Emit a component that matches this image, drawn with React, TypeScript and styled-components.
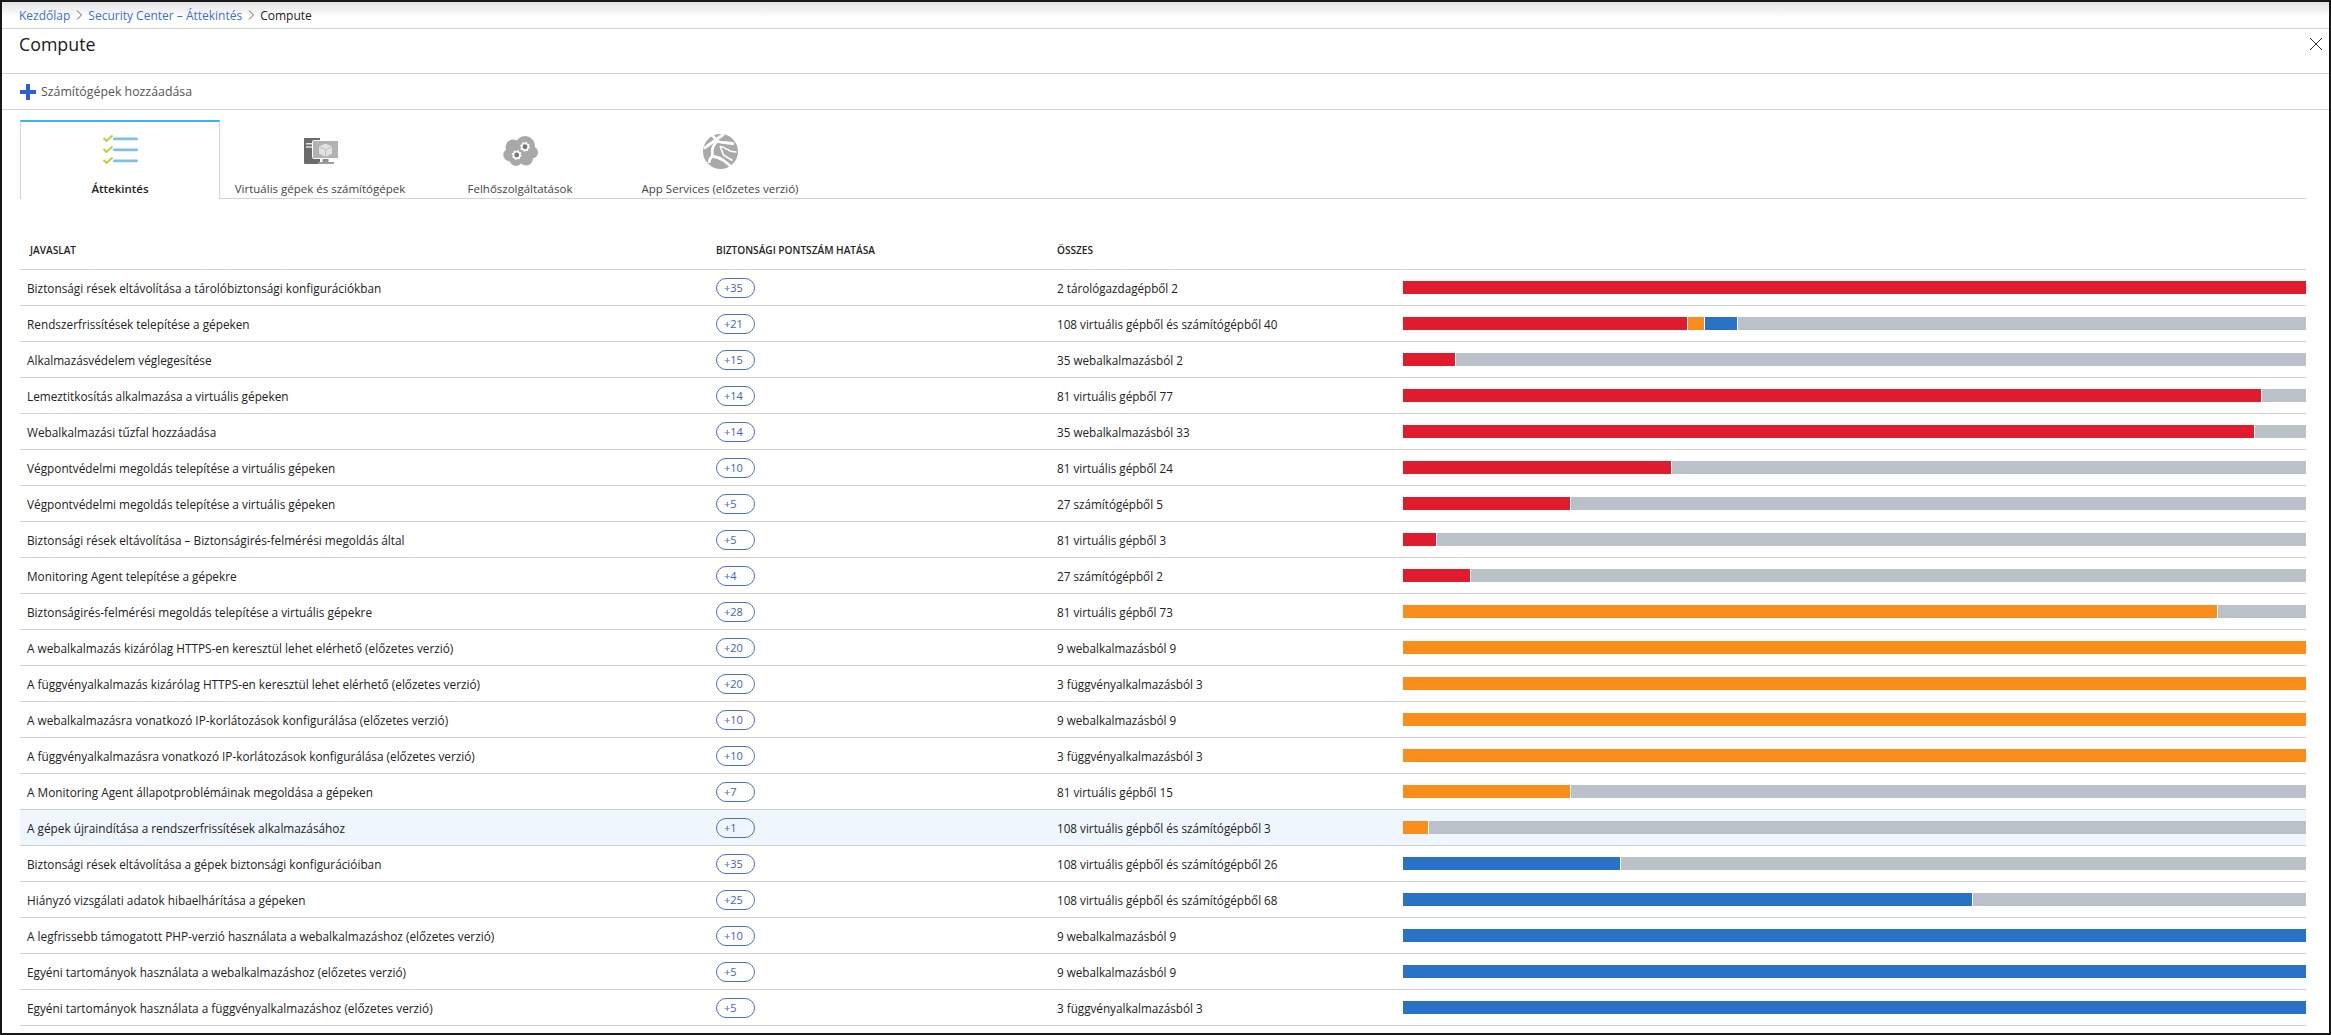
import React from "react";
import styled, { createGlobalStyle } from "styled-components";

const Global = createGlobalStyle`
  html, body { margin: 0; padding: 0; background: #161616; }
  body { font-family: "Open Sans", "Liberation Sans", sans-serif; }
`;

const Frame = styled.div`
  box-sizing: border-box;
  width: 2331px;
  height: 1035px;
  padding: 2px;
  background: #161616;
  overflow: hidden;
`;
const Blade = styled.div`
  height: 100%;
  background: #fff;
  display: flex;
  flex-direction: column;
`;
const Breadcrumbs = styled.nav`
  box-sizing: border-box;
  height: 27px;
  flex: none;
  padding-left: 17px;
  display: flex;
  align-items: center;
  gap: 5px;
  font-size: 12px;
  border-bottom: 1px solid #d4d4d4;
  background: linear-gradient(#e2e2e2 0, #fff 15px);
`;
const Crumb = styled.span`color: #3a6fd8;`;
const CrumbCurrent = styled.span`color: #222;`;
const Chevron = styled.svg`width: 6px; height: 10px; margin: 0 1px; fill: none; stroke: #666; stroke-width: 1;`;
const TitleBar = styled.header`
  box-sizing: border-box;
  height: 45px;
  flex: none;
  padding: 0 7px 0 17px;
  display: flex;
  justify-content: space-between;
  align-items: flex-start;
  border-bottom: 1px solid #d4d4d4;
`;
const Title = styled.h1`
  margin: 1px 0 0;
  font-size: 17.8px;
  line-height: 28px;
  font-weight: 400;
  color: #1a1a1a;
`;
const Close = styled.svg`margin-top: 9px; width: 12px; height: 12px; stroke: #333; stroke-width: 1;`;
const Toolbar = styled.div`
  box-sizing: border-box;
  height: 36px;
  flex: none;
  padding: 0 18px;
  display: flex;
  align-items: center;
  gap: 5px;
  border-bottom: 1px solid #d4d4d4;
  font-size: 12.35px;
  color: #555;
`;
const Content = styled.main`
  flex: 1;
  margin: 10px 23px 0 18px;
  display: flex;
  flex-direction: column;
`;
const Tabs = styled.div`
  display: flex;
  height: 79px;
  flex: none;
  box-sizing: border-box;
  border-bottom: 1px solid #d4d4d4;
`;
const Tab = styled.div<{ $active?: boolean }>`
  box-sizing: border-box;
  width: 200px;
  height: ${(p) => (p.$active ? "79px" : "78px")};
  display: flex;
  flex-direction: column;
  align-items: center;
  font-size: 11.5px;
  color: #444;
  ${(p) =>
    p.$active
      ? `background:#fff;border:1px solid #d4d4d4;border-top:2px solid #3db2ef;border-bottom:none;font-weight:600;color:#222;`
      : `border-top:2px solid transparent;`}
`;
const TabIcon = styled.svg`
  width: 40px;
  height: 40px;
  margin-top: 10px;
  flex: none;
`;
const TabLabel = styled.span`
  margin-top: 8px;
  line-height: 18px;
  white-space: nowrap;
`;
const Row = styled.div<{ $selected?: boolean }>`
  box-sizing: border-box;
  height: 36px;
  flex: none;
  display: grid;
  grid-template-columns: 696px 341px 346px 1fr;
  align-items: center;
  border-bottom: 1px solid #d0d0d0;
  background: ${(p) => (p.$selected ? "#eff6fe" : "#fff")};
  font-size: 11.7px;
  color: #222;
`;
const HeadRow = styled(Row)`
  height: 71px;
  align-items: end;
  padding-bottom: 12px;
  font-size: 10.1px;
  font-weight: 600;
  color: #222;
`;
const HeadFirst = styled.span`padding-left: 10px;`;
const Name = styled.span`padding-left: 7px; font-size: 11.8px; white-space: nowrap;`;
const Count = styled.span`white-space: nowrap;`;
const Pill = styled.span`
  box-sizing: border-box;
  width: 39px;
  height: 20px;
  padding-left: 7px;
  border: 1px solid #4a6fd4;
  border-radius: 10px;
  font-size: 11px;
  line-height: 17px;
  color: #3c62c4;
`;
const Bar = styled.div`
  display: flex;
  height: 13px;
`;
const Segment = styled.div<{ $color: string; $share: number }>`
  box-sizing: border-box;
  flex: 0 0 ${(p) => p.$share * 100}%;
  background: ${(p) => p.$color};
  & + & { border-left: 1px solid #fff; }
`;

const RED = "#de1c2d";
const ORANGE = "#f98e1c";
const BLUE = "#2a72c6";
const GREY = "#bbc1c9";

type RowData = {
  name: string;
  score: number;
  count: string;
  total: number;
  red?: number;
  orange?: number;
  blue?: number;
};

const rows: RowData[] = [
  { name: "Biztonsági rések eltávolítása a tárolóbiztonsági konfigurációkban", score: 35, count: "2 tárológazdagépből 2", total: 2, red: 2 },
  { name: "Rendszerfrissítések telepítése a gépeken", score: 21, count: "108 virtuális gépből és számítógépből 40", total: 108, red: 34, orange: 2, blue: 4 },
  { name: "Alkalmazásvédelem véglegesítése", score: 15, count: "35 webalkalmazásból 2", total: 35, red: 2 },
  { name: "Lemeztitkosítás alkalmazása a virtuális gépeken", score: 14, count: "81 virtuális gépből 77", total: 81, red: 77 },
  { name: "Webalkalmazási tűzfal hozzáadása", score: 14, count: "35 webalkalmazásból 33", total: 35, red: 33 },
  { name: "Végpontvédelmi megoldás telepítése a virtuális gépeken", score: 10, count: "81 virtuális gépből 24", total: 81, red: 24 },
  { name: "Végpontvédelmi megoldás telepítése a virtuális gépeken", score: 5, count: "27 számítógépből 5", total: 27, red: 5 },
  { name: "Biztonsági rések eltávolítása – Biztonságirés-felmérési megoldás által", score: 5, count: "81 virtuális gépből 3", total: 81, red: 3 },
  { name: "Monitoring Agent telepítése a gépekre", score: 4, count: "27 számítógépből 2", total: 27, red: 2 },
  { name: "Biztonságirés-felmérési megoldás telepítése a virtuális gépekre", score: 28, count: "81 virtuális gépből 73", total: 81, orange: 73 },
  { name: "A webalkalmazás kizárólag HTTPS-en keresztül lehet elérhető (előzetes verzió)", score: 20, count: "9 webalkalmazásból 9", total: 9, orange: 9 },
  { name: "A függvényalkalmazás kizárólag HTTPS-en keresztül lehet elérhető (előzetes verzió)", score: 20, count: "3 függvényalkalmazásból 3", total: 3, orange: 3 },
  { name: "A webalkalmazásra vonatkozó IP-korlátozások konfigurálása (előzetes verzió)", score: 10, count: "9 webalkalmazásból 9", total: 9, orange: 9 },
  { name: "A függvényalkalmazásra vonatkozó IP-korlátozások konfigurálása (előzetes verzió)", score: 10, count: "3 függvényalkalmazásból 3", total: 3, orange: 3 },
  { name: "A Monitoring Agent állapotproblémáinak megoldása a gépeken", score: 7, count: "81 virtuális gépből 15", total: 81, orange: 15 },
  { name: "A gépek újraindítása a rendszerfrissítések alkalmazásához", score: 1, count: "108 virtuális gépből és számítógépből 3", total: 108, orange: 3 },
  { name: "Biztonsági rések eltávolítása a gépek biztonsági konfigurációiban", score: 35, count: "108 virtuális gépből és számítógépből 26", total: 108, blue: 26 },
  { name: "Hiányzó vizsgálati adatok hibaelhárítása a gépeken", score: 25, count: "108 virtuális gépből és számítógépből 68", total: 108, blue: 68 },
  { name: "A legfrissebb támogatott PHP-verzió használata a webalkalmazáshoz (előzetes verzió)", score: 10, count: "9 webalkalmazásból 9", total: 9, blue: 9 },
  { name: "Egyéni tartományok használata a webalkalmazáshoz (előzetes verzió)", score: 5, count: "9 webalkalmazásból 9", total: 9, blue: 9 },
  { name: "Egyéni tartományok használata a függvényalkalmazáshoz (előzetes verzió)", score: 5, count: "3 függvényalkalmazásból 3", total: 3, blue: 3 },
];

const ChevronIcon = () => (
  <Chevron viewBox="0 0 6 10"><path d="M1 .5 5.5 5 1 9.5" /></Chevron>
);

const Gear = ({ x, y }: { x: number; y: number }) => (
  <g>
    <circle cx={x} cy={y} r={4.1} fill="none" stroke="#fff" strokeWidth={1.6} strokeDasharray="1.6 1.6" />
    <circle cx={x} cy={y} r={3.2} fill="#777" stroke="#fff" strokeWidth={1.5} />
  </g>
);

const ChecklistIcon = () => (
  <TabIcon viewBox="0 0 40 40">
    {[6, 17, 28].map((y) => (
      <g key={y}>
        <path d={`M3.500 ${y}l3 3 6-5.500`} fill="none" stroke="#b4d232" strokeWidth="1.800" />
        <rect x="13" y={y - 0.4} width="25" height="2.600" rx="1.200" fill="#7fc1e2" />
      </g>
    ))}
  </TabIcon>
);

const MachinesIcon = () => (
  <TabIcon viewBox="0 0 40 40">
    <path d="M4 6h16v26H5a1 1 0 0 1-1-1z" fill="#6b6b6b" />
    <path d="M6 11.700h7M6 15h7" stroke="#e4e4e4" strokeWidth="1.400" />
    <rect x="12.500" y="8.500" width="26" height="18" rx="1" fill="#b2b2b2" stroke="#fff" strokeWidth="1" />
    <path d="M25.500 11.500l6.500 3v7l-6.500 3.200-6.500-3.200v-7z" fill="#e2e2e2" />
    <path d="M25.500 18l6.500-3.500M25.500 18l-6.500-3.500M25.500 18v6.700" stroke="#b2b2b2" strokeWidth=".8" fill="none" />
    <rect x="22.500" y="27" width="6" height="3" fill="#8e8e8e" />
    <rect x="18" y="30" width="16" height="2" fill="#9c9c9c" />
  </TabIcon>
);

const CloudIcon = () => (
  <TabIcon viewBox="0 0 40 40">
    <g fill="#a8a8a8">
      <circle cx="13" cy="15" r="7.500" />
      <circle cx="25" cy="14" r="10" />
      <circle cx="9.500" cy="23" r="6.200" />
      <circle cx="16" cy="27.500" r="6.500" />
      <circle cx="26" cy="26.500" r="7" />
      <circle cx="32" cy="20.500" r="6" />
    </g>
    <Gear x={25} y={14.700} />
    <Gear x={16.700} y={23} />
  </TabIcon>
);

const GlobeIcon = () => (
  <TabIcon viewBox="0 0 40 40">
    <circle cx="20.500" cy="19.500" r="17.500" fill="#a9a9a9" />
    <g fill="none" stroke="#fff" strokeWidth="2.800">
      <path d="M10 1l8 8.500c5 1.500 11 1 16 2.500" />
      <path d="M4 16.500C10 12 17 7 24 2" />
      <path d="M17 9.500c-3 3-5 6-4.700 10 .2 2 .5 4-.8 5.500-1.500 1.500-2.500 3-2.500 6" />
      <path d="M11.500 24.500c5 0 9 1.500 13.500 5l6 5" />
    </g>
    <path d="M20.500 14.500c2 0 4 1 5.500 2.500 2 0 3 1 4 2 2 .5 4 1 6.500 1" fill="none" stroke="#fff" strokeWidth="1.600" />
    <path d="M20 14l3.500 9 4 2.500 5 3" fill="none" stroke="#fff" strokeWidth="1.600" />
  </TabIcon>
);

export default function App() {
  return (
    <Frame>
      <Global />
      <Blade>
        <Breadcrumbs>
          <Crumb>Kezdőlap</Crumb>
          <ChevronIcon />
          <Crumb>Security Center – Áttekintés</Crumb>
          <ChevronIcon />
          <CrumbCurrent>Compute</CrumbCurrent>
        </Breadcrumbs>
        <TitleBar>
          <Title>Compute</Title>
          <Close viewBox="0 0 12 12"><path d="M0 0l12 12M12 0 0 12" /></Close>
        </TitleBar>
        <Toolbar>
          <svg width="16" height="16" viewBox="0 0 16 16"><path d="M6 0h4v6h6v4h-6v6H6v-6H0V6h6z" fill="#2b5fdb" /></svg>
          Számítógépek hozzáadása
        </Toolbar>
        <Content>
          <Tabs>
            <Tab $active><ChecklistIcon /><TabLabel>Áttekintés</TabLabel></Tab>
            <Tab><MachinesIcon /><TabLabel>Virtuális gépek és számítógépek</TabLabel></Tab>
            <Tab><CloudIcon /><TabLabel>Felhőszolgáltatások</TabLabel></Tab>
            <Tab><GlobeIcon /><TabLabel>App Services (előzetes verzió)</TabLabel></Tab>
          </Tabs>
          <HeadRow as="div">
            <HeadFirst>JAVASLAT</HeadFirst>
            <span>BIZTONSÁGI PONTSZÁM HATÁSA</span>
            <span>ÖSSZES</span>
          </HeadRow>
          {rows.map((r, i) => {
            const done = (r.red ?? 0) + (r.orange ?? 0) + (r.blue ?? 0);
            return (
              <Row key={i} $selected={i === 15}>
                <Name>{r.name}</Name>
                <Pill>+{r.score}</Pill>
                <Count>{r.count}</Count>
                <Bar>
                  {r.red ? <Segment $color={RED} $share={r.red / r.total} /> : null}
                  {r.orange ? <Segment $color={ORANGE} $share={r.orange / r.total} /> : null}
                  {r.blue ? <Segment $color={BLUE} $share={r.blue / r.total} /> : null}
                  {done < r.total ? <Segment $color={GREY} $share={(r.total - done) / r.total} /> : null}
                </Bar>
              </Row>
            );
          })}
        </Content>
      </Blade>
    </Frame>
  );
}
